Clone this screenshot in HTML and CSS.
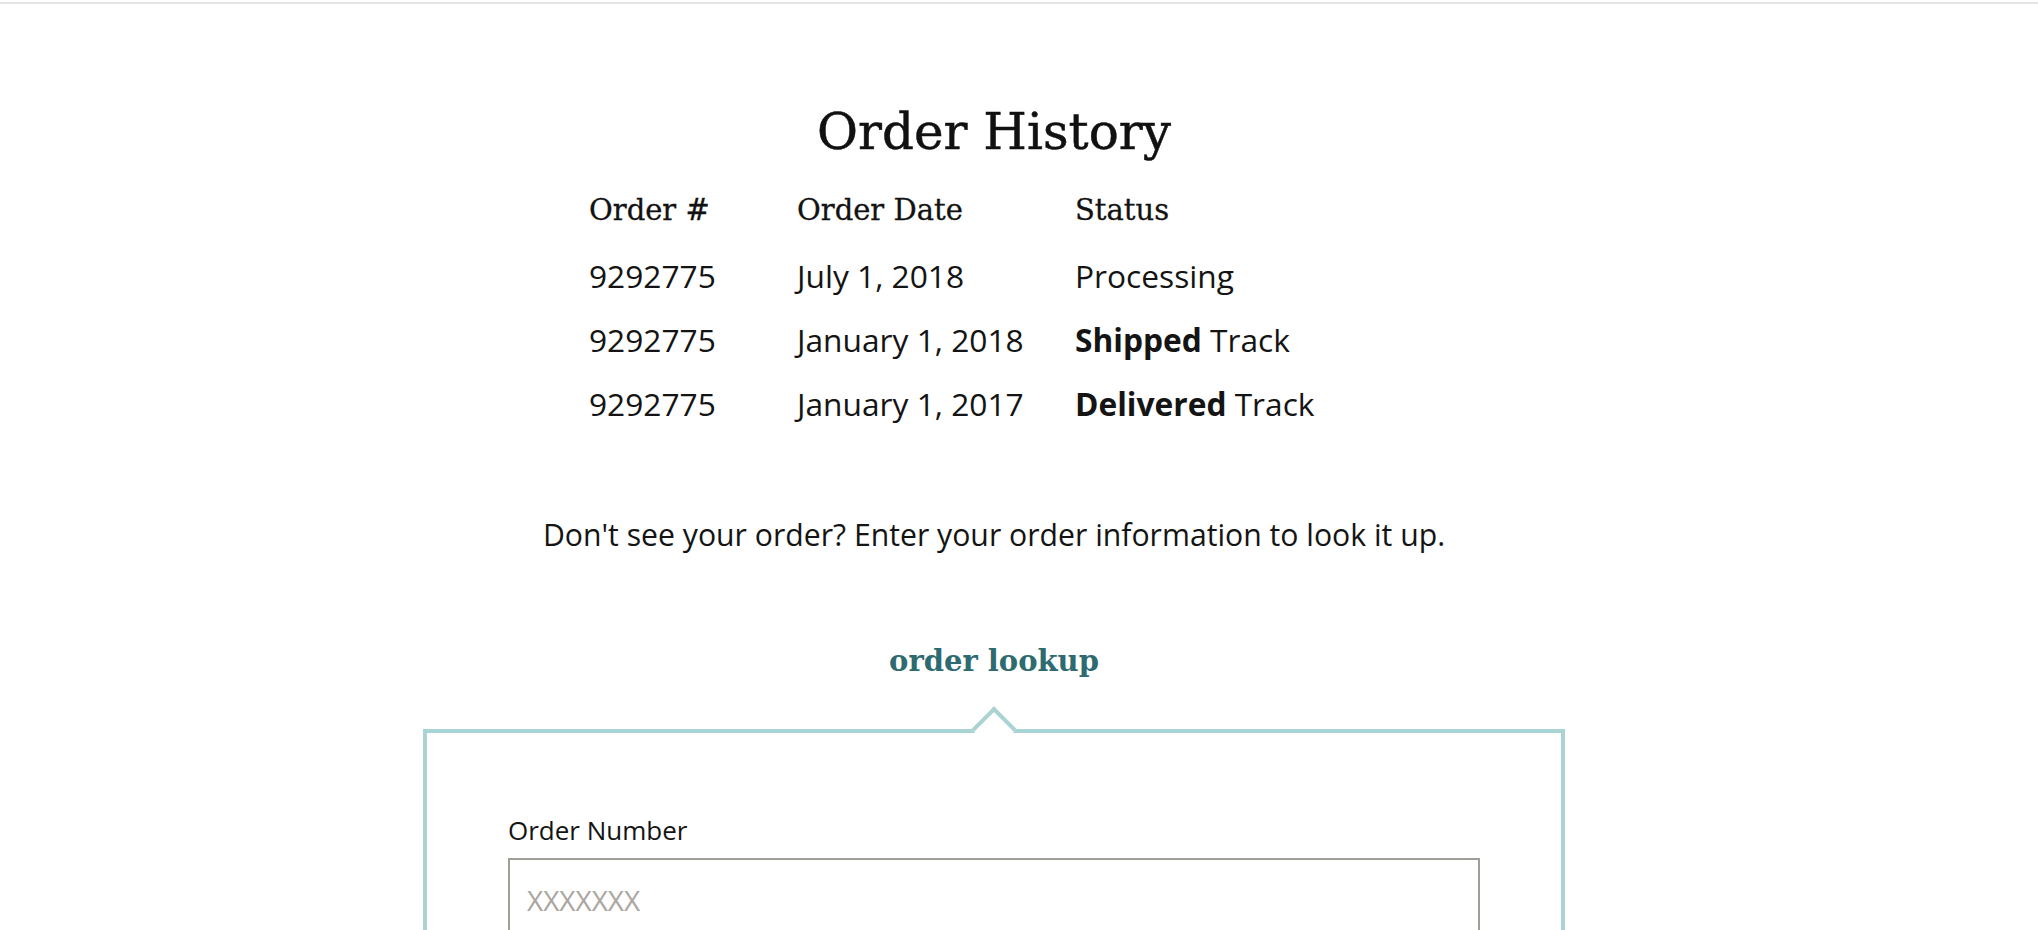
FILE: index.html
```html
<!DOCTYPE html>
<html lang="en">
<head>
<meta charset="utf-8">
<title>Order History</title>
<link rel="stylesheet" href="styles.css">
</head>
<body>
<div class="topline"></div>
<main class="page">
  <h1 class="title">Order History</h1>
  <div class="orders">
    <div class="head">Order #</div>
    <div class="head">Order Date</div>
    <div class="head">Status</div>
    <div class="cell">9292775</div>
    <div class="cell">July 1, 2018</div>
    <div class="cell">Processing</div>
    <div class="cell">9292775</div>
    <div class="cell">January 1, 2018</div>
    <div class="cell"><strong>Shipped</strong> Track</div>
    <div class="cell">9292775</div>
    <div class="cell">January 1, 2017</div>
    <div class="cell"><strong>Delivered</strong> Track</div>
  </div>
  <p class="note">Don't see your order? Enter your order information to look it up.</p>
  <h2 class="lookup-title">order lookup</h2>
  <section class="lookup">
    <span class="notch"></span>
    <label class="field-label" for="ordernum">Order Number</label>
    <input class="field" id="ordernum" type="text" placeholder="XXXXXXX">
  </section>
</main>
</body>
</html>
```
FILE: styles.css
```css
html, body {
  margin: 0;
  padding: 0;
  background: #ffffff;
}
body {
  font-family: "Open Sans", "Noto Sans", sans-serif;
  color: #141414;
  overflow: hidden;
}
.topline {
  height: 2px;
  margin-top: 2px;
  background: #e4e4e4;
}
.page {
  width: 1988px;
  display: flex;
  flex-direction: column;
  align-items: center;
}
.title {
  margin: 96px 0 0;
  font-family: "DejaVu Serif", serif;
  font-weight: normal;
  font-size: 50px;
  line-height: 64px;
  color: #111111;
  -webkit-text-stroke: 0.5px #111111;
}
.orders {
  display: grid;
  grid-template-columns: 208px 278px 324px;
  margin-top: 26px;
}
.head {
  font-family: "DejaVu Serif", serif;
  font-size: 29px;
  line-height: 40px;
  margin-bottom: 14px;
  color: #121212;
  -webkit-text-stroke: 0.3px #121212;
}
.cell {
  font-size: 31.7px;
  line-height: 64px;
  white-space: nowrap;
}
.cell strong {
  font-weight: 700;
}
.note {
  margin: 78px 0 0;
  font-size: 30.2px;
  line-height: 42px;
}
.lookup-title {
  margin: 85px 0 0;
  font-family: "DejaVu Serif", serif;
  font-weight: bold;
  font-size: 29px;
  line-height: 40px;
  color: #2e6b70;
}
.lookup {
  position: relative;
  box-sizing: border-box;
  width: 1142px;
  margin-top: 48px;
  border: 4px solid #aad4d3;
  padding: 80px 81px 40px;
  display: flex;
  flex-direction: column;
}
.notch {
  position: absolute;
  left: 50%;
  top: -4px;
  width: 32px;
  height: 32px;
  margin-left: -16px;
  margin-top: -16px;
  background: #ffffff;
  border-top: 4px solid #aad4d3;
  border-left: 4px solid #aad4d3;
  box-sizing: border-box;
  transform: rotate(45deg);
}
.field-label {
  font-size: 26px;
  line-height: 35px;
  color: #141414;
}
.field {
  margin-top: 10px;
  box-sizing: border-box;
  width: 100%;
  border: 2px solid #a19e97;
  border-radius: 0;
  padding: 21px 17px 30px;
  font-family: "Open Sans", "Noto Sans", sans-serif;
  font-size: 28px;
  line-height: 38px;
  color: #141414;
  outline: none;
}
.field::placeholder {
  color: #aaa6a0;
  opacity: 1;
}
```
